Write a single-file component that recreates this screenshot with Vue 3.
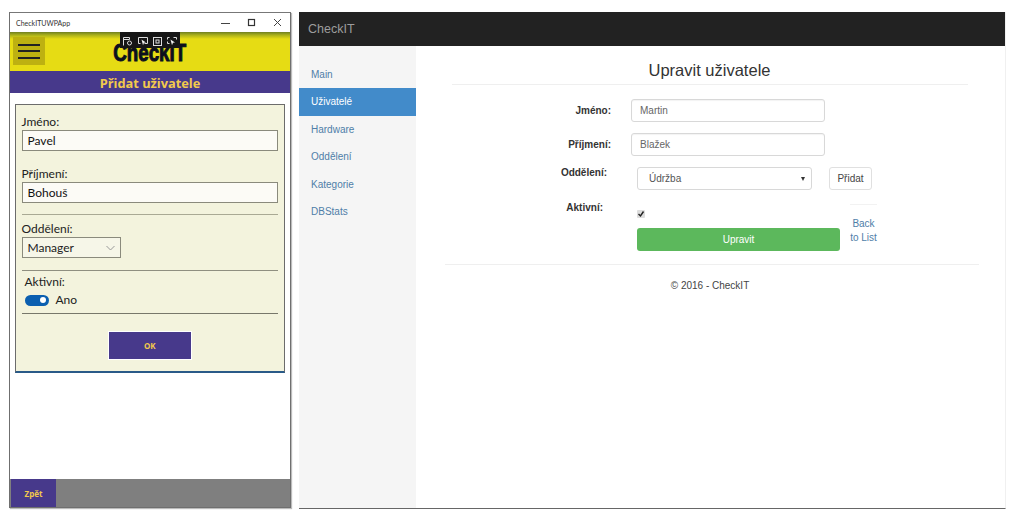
<script setup>
const navItems = ['Main', 'Uživatelé', 'Hardware', 'Oddělení', 'Kategorie', 'DBStats']
</script>

<template>
  <div class="desktop">
    <section class="uwp">
      <div class="titlebar">
        <span class="apptitle">CheckITUWPApp</span>
        <div class="winbtns">
          <svg width="10" height="10" viewBox="0 0 10 10"><path d="M0 5.500h9" stroke="#444" fill="none"/></svg>
          <svg width="10" height="10" viewBox="0 0 10 10"><rect x="1.500" y="1.500" width="6" height="6" stroke="#333" stroke-width="1.200" fill="none"/></svg>
          <svg width="10" height="10" viewBox="0 0 10 10"><path d="M1 1l7 7M8 1l-7 7" stroke="#444" fill="none"/></svg>
        </div>
      </div>
      <header class="yellow">
        <div class="burger"><i></i><i></i><i></i></div>
        <div class="logo"><span>CheckIT</span></div>
        <div class="devbar">
          <svg width="60" height="16" viewBox="0 0 60 16" fill="none" stroke="#ddd" stroke-width="1">
            <path d="M3.500 13.500v-8h6v2M3.500 7.500h6"/><circle cx="9.500" cy="11" r="2"/>
            <path d="M18.500 5.500h9v6h-3M18.500 5.500v6h2"/><path d="M21.500 7.500l4.500 3-2 .3-1 2.400z" fill="#f0f0f0" stroke="none"/>
            <rect x="33.500" y="5.500" width="8" height="8"/><rect x="36" y="8" width="3" height="3"/>
            <path d="M47.500 5.500h2M53.500 5.500h3v2M47.500 5.500v2M47.500 9.500v2h2"/><path d="M50.500 7.500l4.500 3-2 .3-1 2.400z" fill="#f0f0f0" stroke="none"/>
          </svg>
        </div>
      </header>
      <div class="purple">Přidat uživatele</div>
      <div class="uwpbody">
        <form class="card" @submit.prevent>
          <label class="ulabel">Jméno:</label>
          <div class="uinput">Pavel</div>
          <label class="ulabel second">Příjmení:</label>
          <div class="uinput">Bohouš</div>
          <div class="rule r1"></div>
          <label class="ulabel third">Oddělení:</label>
          <div class="ucombo">
            <span>Manager</span>
            <svg width="9" height="6" viewBox="0 0 9 6"><path d="M.5 1l4 4 4-4" stroke="#999" fill="none"/></svg>
          </div>
          <div class="rule r2"></div>
          <div class="ulabel active">Aktivní:</div>
          <div class="toggle-row">
            <span class="toggle"><b></b></span>
            <span>Ano</span>
          </div>
          <div class="rule r3"></div>
          <div class="okwrap"><button class="ok">OK</button></div>
        </form>
      </div>
      <footer class="bottombar"><button class="back">Zpět</button></footer>
    </section>

    <section class="web">
      <header class="navbar">CheckIT</header>
      <div class="webbody">
        <nav class="side">
          <a v-for="item in navItems" :key="item" :class="{ on: item === 'Uživatelé' }">{{ item }}</a>
        </nav>
        <main class="content">
          <h2>Upravit uživatele</h2>
          <div class="hr top"></div>
          <div class="frow r-name">
            <label>Jméno:</label>
            <div class="tinput">Martin</div>
          </div>
          <div class="frow r-sur">
            <label>Příjmení:</label>
            <div class="tinput">Blažek</div>
          </div>
          <div class="frow r-dept">
            <label>Oddělení:</label>
            <div class="select"><span>Údržba</span><em></em></div>
            <button class="add">Přidat</button>
          </div>
          <div class="frow r-act">
            <label>Aktivní:</label>
            <div class="actcol">
              <span class="check">
                <svg width="8" height="8" viewBox="0 0 8 8"><path d="M1.500 4l2 2 3-4.500" stroke="#222" stroke-width="1.400" fill="none"/></svg>
              </span>
              <button class="submit">Upravit</button>
            </div>
            <div class="backcol"><div class="minihr"></div><a>Back<br>to List</a></div>
          </div>
          <div class="hr bottom"></div>
          <p class="copy">© 2016 - CheckIT</p>
        </main>
      </div>
    </section>
  </div>
</template>

<style>
html, body { margin: 0; background: #fff; }
</style>

<style scoped>
.desktop {
  width: 1024px; height: 523px; box-sizing: border-box; overflow: hidden;
  display: flex; gap: 8px; padding: 12px 0 0 9px; background: #fff;
}
.uwp {
  position: relative; width: 282px; height: 496px; box-sizing: border-box;
  border: 1px solid #6f6f6f; border-top-color: #777; background: #fff;
  display: flex; flex-direction: column; font-family: Lato, "Open Sans", sans-serif;
  box-shadow: 1px 1px 1px #bbb;
}
.titlebar { height: 19px; display: flex; align-items: center; justify-content: space-between; padding: 0 7px 0 6px; }
.apptitle { font-size: 7px; color: #333; }
.winbtns { display: flex; gap: 16px; }
.yellow {
  position: relative; height: 39px; flex: none; overflow: hidden;
  background: linear-gradient(#6f7f22 0, #a9b01b 3px, #e6dc14 7px, #e6dc14 100%);
}
.burger {
  position: absolute; left: 3px; top: 5px; width: 32px; height: 28px; box-sizing: border-box;
  background: #bdb111; display: flex; flex-direction: column; justify-content: center; gap: 4.500px; padding: 0 5px;
}
.burger i { display: block; height: 2px; background: #222; }
.logo {
  text-align: center; font-family: "Liberation Sans", sans-serif; font-weight: 700; font-size: 24px;
  line-height: 20px; margin-top: 11px; color: #0c0f1e; -webkit-text-stroke: 1px #0c0f1e;
}
.logo span { display: inline-block; transform: scaleX(.78); }
.devbar { position: absolute; left: 110px; top: 0; width: 60px; height: 16px; background: #161616; }
.devbar svg { display: block; }
.purple {
  height: 22px; flex: none; background: #47398b; color: #f2c94c; text-align: center;
  font-family: "Open Sans", sans-serif; font-weight: 700; font-size: 12.800px; line-height: 24px;
}
.uwpbody { flex: 1; padding: 11px 5px 0; }
.card {
  height: 269px; box-sizing: border-box; border: 1.500px solid #6c6c6c; border-bottom: 2px solid #2a5a88;
  background: #f3f3dd; padding: 9px 6px 0 5.500px; color: #222; font-size: 12px;
}
.ulabel { display: block; line-height: 16px; }
.second { margin-top: 15px; }
.third { margin-top: 6px; }
.uinput {
  height: 21px; box-sizing: border-box; border: 1.500px solid #8a8a7c; background: #fcfbf6;
  padding: 0 5px; line-height: 20px; color: #111;
}
.rule { height: 1px; background: #a9a994; }
.r1 { margin-top: 11px; }
.r2 { margin-top: 12px; background: #8f8f80; }
.r3 { margin-top: 5px; background: #77776a; }
.ucombo {
  width: 99px; height: 21px; box-sizing: border-box; border: 1.500px solid #8a8a7c; background: #f6f6e8;
  padding: 0 5px; display: flex; align-items: center; justify-content: space-between;
}
.active { padding-left: 3px; margin-top: 3px; }
.toggle-row { display: flex; align-items: center; gap: 7px; padding-left: 3px; margin-top: 2px; line-height: 16px; }
.toggle {
  width: 24px; height: 11px; border-radius: 6px; background: #0b5fb0; position: relative; display: block;
}
.toggle b { position: absolute; right: 3px; top: 2.500px; width: 6px; height: 6px; border-radius: 50%; background: #fff; }
.okwrap { display: flex; justify-content: center; padding-top: 17px; }
.ok {
  width: 84px; height: 29px; border: 1px solid #fff; background: #47398b; color: #f2c94c;
  font: 700 8px "Open Sans", sans-serif; padding: 0;
}
.bottombar { margin-top: auto; height: 28px; flex: none; background: #7f7f7f; display: flex; }
.back {
  width: 45px; border: 0; padding: 0; background: #47398b; color: #f2c94c; margin-left: 1px;
  font: 700 8px "Open Sans", sans-serif;
}

.web {
  width: 706px; height: 496px; border-bottom: 1px solid #666; display: flex; flex-direction: column;
  font-family: "Liberation Sans", Arial, sans-serif; box-sizing: content-box; border-right: 1px solid #f0f0f0;
}
.navbar {
  height: 34px; flex: none; background: #222; color: #9d9d9d; font-size: 12.500px; line-height: 34px; padding-left: 9px;
}
.webbody { flex: 1; display: flex; min-height: 0; }
.side {
  width: 117px; flex: none; background: #f5f5f5; padding-top: 14.500px; box-sizing: border-box;
}
.side a {
  display: block; height: 27.600px; line-height: 27.600px; padding-left: 12px; color: #4f7ea8; font-size: 10px;
}
.side a.on { background: #428bca; color: #fff; }
.content { flex: 1; display: flex; flex-direction: column; font-size: 10px; color: #333; min-width: 0; }
h2 { margin: 14px 0 0; padding-right: 2px; text-align: center; font-weight: 400; font-size: 16.500px; line-height: 20px; color: #333; }
.hr { height: 1px; background: #efefef; }
.hr.top { margin: 4px 37px 0 36px; }
.frow { display: flex; }
.frow label { width: 195px; box-sizing: border-box; text-align: right; font-weight: 700; color: #333; }
.r-name { margin-top: 14px; height: 23px; align-items: center; }
.r-sur { margin-top: 11px; height: 23px; align-items: center; }
.r-dept { margin-top: 11px; height: 24px; }
.r-act { margin-top: 5px; }
.tinput {
  width: 194px; height: 23px; box-sizing: border-box; margin-left: 20px; border: 1px solid #d8d8d8; border-radius: 3px;
  line-height: 21px; padding-left: 8px; color: #666; box-shadow: inset 0 1px 1px rgba(0,0,0,.05);
}
.r-dept label { width: 191px; padding-top: 0; line-height: 12px; }
.select {
  width: 175px; height: 23px; box-sizing: border-box; margin-left: 30px; border: 1px solid #d8d8d8; border-radius: 3px;
  display: flex; align-items: center; justify-content: space-between; padding: 0 6px 0 11px; color: #555;
}
.select em { width: 0; height: 0; border: 2.500px solid transparent; border-top: 4px solid #333; border-bottom: 0; }
.add {
  width: 43px; height: 23px; margin-left: 17px; padding: 0; border: 1px solid #e0e0e0; border-radius: 3px; background: #fff;
  color: #444; font: 10px "Liberation Sans", sans-serif;
}
.r-act label { width: 187px; line-height: 12px; padding-top: 6px; }
.actcol { margin-left: 34px; width: 203px; display: flex; flex-direction: column; }
.check {
  width: 8px; height: 8px; margin: 14px 0 0 0; background: #ddd; border-radius: 1px; display: block;
}
.check svg { display: block; }
.submit {
  margin-top: 10px; height: 23px; padding: 0; border: 0; border-radius: 3px; background: #5cb85c; color: #fff;
  font: 10px "Liberation Sans", sans-serif;
}
.backcol { margin-left: 10px; width: 27px; text-align: center; color: #4f7ea8; line-height: 14px; }
.minihr { height: 1px; background: #f2f2f2; margin: 8px 0 12px; }
.hr.bottom { margin: 13px 26px 0 29px; }
.copy { margin: 15px 0 0; padding-right: 1px; text-align: center; font-size: 10px; line-height: 12px; color: #444; }
</style>
